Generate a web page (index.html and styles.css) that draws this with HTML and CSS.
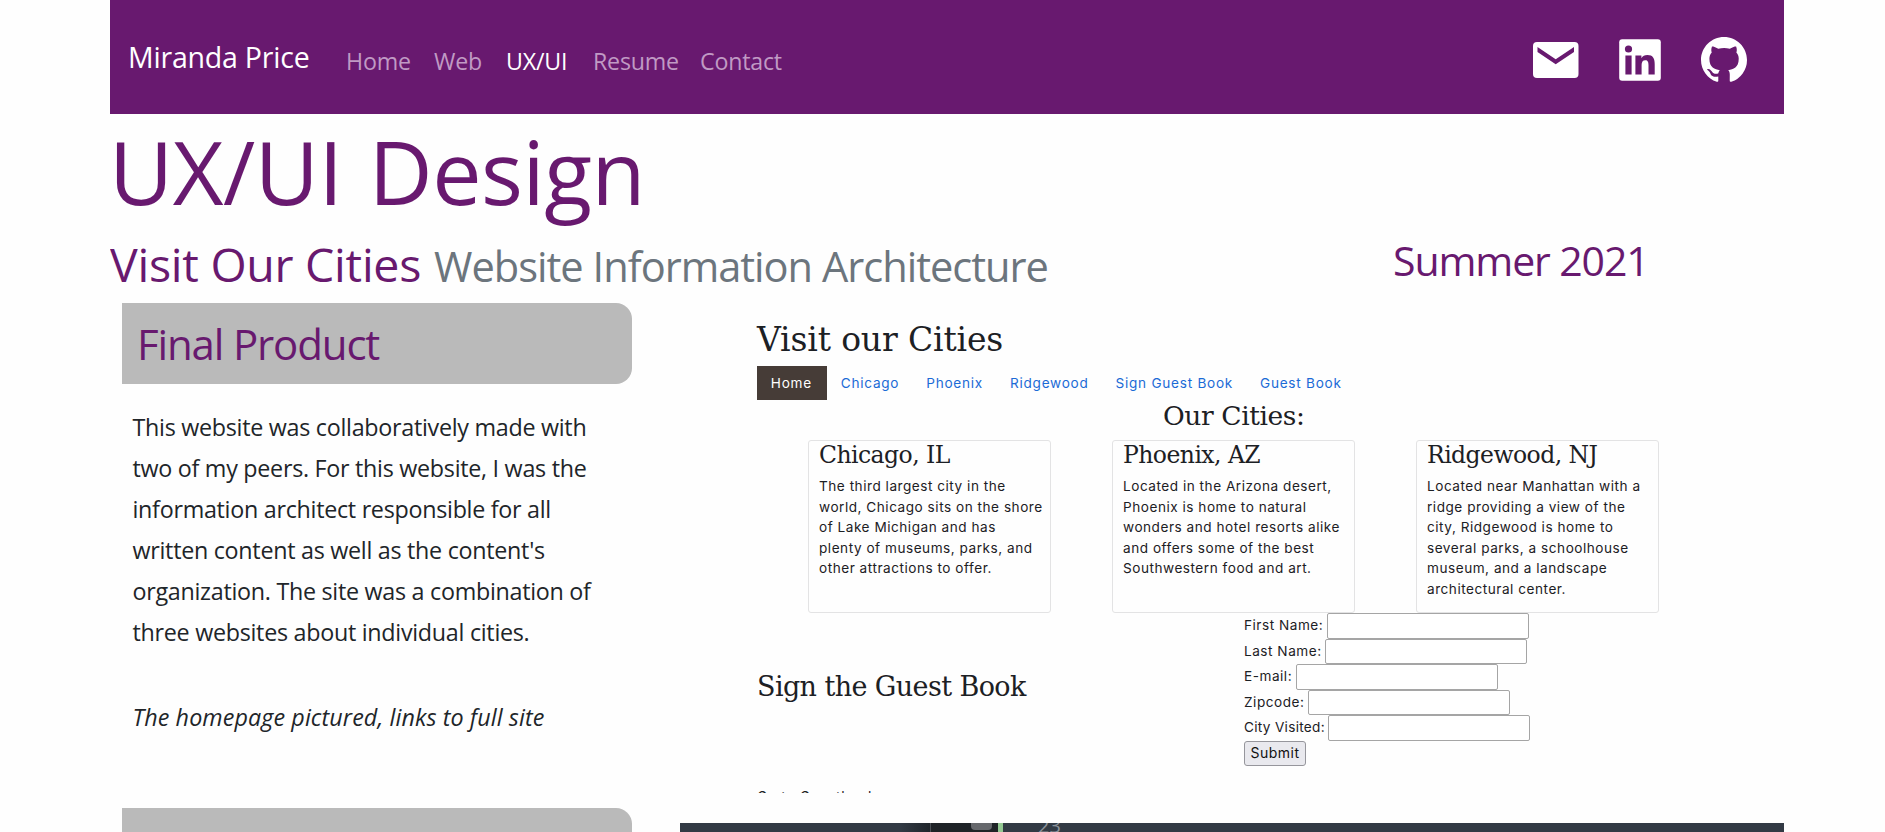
FILE: index.html
```html
<!DOCTYPE html>
<html lang="en">
<head>
<meta charset="utf-8">
<title>Miranda Price - UX/UI Design</title>
<link rel="stylesheet" href="styles.css">
</head>
<body>
<div class="page">
  <header class="navbar">
    <a class="brand">Miranda Price</a>
    <nav class="links">
      <a class="l-home">Home</a><a class="l-web">Web</a><a class="l-ux active">UX/UI</a><a class="l-resume">Resume</a><a class="l-contact">Contact</a>
    </nav>
    <div class="social">
      <svg width="46" height="46" viewBox="0 0 46 46"><rect x="0" y="5" width="45.500" height="36" rx="4" fill="#fff"/><path d="M4.500 10v5l18.200 12.300L41 15v-5L22.700 22.300z" fill="#68196f"/></svg>
      <svg width="42" height="46" viewBox="0 0 42 46"><rect x="0.200" y="2.300" width="41.600" height="41.400" rx="3" fill="#fff"/><g fill="#68196f"><circle cx="9.500" cy="12" r="3.600"/><path d="M6.400 18.500h6.200v19H6.400zM16.400 18.500h6v2.700c1.200-2 3.200-3.200 6-3.200 5.500 0 7.300 3.400 7.300 9v10.500h-6.200v-9.400c0-2.800-.6-4.900-3.200-4.900-2.700 0-3.700 2-3.700 4.900v9.400h-6.200z"/></g></svg>
      <svg width="46" height="46" viewBox="0 0 16 16"><path fill="#fff" d="M8 0C3.580 0 0 3.580 0 8c0 3.540 2.290 6.530 5.470 7.590.4.070.55-.17.55-.38 0-.19-.01-.82-.01-1.490-2.010.37-2.530-.49-2.690-.94-.09-.23-.48-.94-.82-1.130-.28-.15-.68-.52-.01-.53.63-.01 1.080.58 1.230.82.72 1.210 1.870.87 2.330.66.07-.52.28-.87.51-1.070-1.780-.2-3.640-.89-3.640-3.950 0-.87.31-1.590.82-2.150-.08-.2-.36-1.020.08-2.120 0 0 .67-.21 2.200.82.64-.18 1.320-.27 2-.27s1.360.09 2 .27c1.530-1.040 2.200-.82 2.200-.82.44 1.100.16 1.920.08 2.120.51.56.82 1.270.82 2.150 0 3.070-1.870 3.750-3.650 3.950.29.25.54.73.54 1.480 0 1.070-.01 1.930-.01 2.200 0 .21.15.46.55.38A8.010 8.010 0 0 0 16 8c0-4.420-3.580-8-8-8z"/></svg>
    </div>
  </header>

  <h1>UX/UI Design</h1>
  <div class="project-head">
    <h2><span class="name">Visit Our Cities</span><small>Website Information Architecture</small></h2>
    <span class="date">Summer 2021</span>
  </div>

  <main class="columns">
    <section class="left">
      <h3 class="label"><span>Final Product</span></h3>
      <p class="copy">This website was collaboratively made with<br>two of my peers. For this website, I was the<br>information architect responsible for all<br>written content as well as the content's<br>organization. The site was a combination of<br>three websites about individual cities.</p>
      <p class="note">The homepage pictured, links to full site</p>
      <div class="label next"></div>
    </section>

    <section class="right">
      <div class="shot">
        <div class="s-title">Visit our Cities</div>
        <div class="s-nav"><span class="on">Home</span><span>Chicago</span><span>Phoenix</span><span>Ridgewood</span><span>Sign Guest Book</span><span>Guest Book</span></div>
        <div class="s-sub">Our Cities:</div>
        <div class="cards">
          <div class="card"><b>Chicago, IL</b><p>The third largest city in the<br>world, Chicago sits on the shore<br>of Lake Michigan and has<br>plenty of museums, parks, and<br>other attractions to offer.</p></div>
          <div class="card"><b>Phoenix, AZ</b><p>Located in the Arizona desert,<br>Phoenix is home to natural<br>wonders and hotel resorts alike<br>and offers some of the best<br>Southwestern food and art.</p></div>
          <div class="card"><b>Ridgewood, NJ</b><p>Located near Manhattan with a<br>ridge providing a view of the<br>city, Ridgewood is home to<br>several parks, a schoolhouse<br>museum, and a landscape<br>architectural center.</p></div>
        </div>
        <div class="guest">
          <div class="s-sign">Sign the Guest Book</div>
          <div class="form">
            <div class="row"><span>First Name:</span><i></i></div>
            <div class="row"><span>Last Name:</span><i></i></div>
            <div class="row"><span>E-mail:</span><i></i></div>
            <div class="row"><span>Zipcode:</span><i></i></div>
            <div class="row"><span class="city">City Visited:</span><i></i></div>
            <div class="row"><button>Submit</button></div>
          </div>
        </div>
        <div class="s-more">Go to Guestbook</div>
      </div>
      <div class="editor"><div class="fade"></div><div class="phone"><i></i></div><div class="edge"></div><span>23</span></div>
    </section>
  </main>
</div>
</body>
</html>
```
FILE: styles.css
```css
* { box-sizing: border-box; }
body { margin: 0; background: #fefefe; color: #212529; font-family: "Open Sans", "Noto Sans", sans-serif; }
h1, h2, h3, p { margin: 0; font-weight: 400; }
.page { width: 1674px; height: 832px; overflow: hidden; margin-left: 110px; white-space: nowrap; }

.navbar { height: 114px; background: #68196f; color: #fff; display: flex; align-items: center; padding: 0 37px 0 18px; }
.brand { font-size: 28.5px; width: 218px; letter-spacing: -0.2px; }
.links { display: flex; padding-top: 7px; font-size: 23.2px; letter-spacing: -0.2px; color: #c09ac4; }
.links a { display: block; }
.l-home { width: 88px; }
.l-web { width: 72px; }
.l-ux { width: 87px; }
.l-resume { width: 107px; }
.active { color: #fff; }
.social { margin-left: auto; display: flex; align-items: center; gap: 40px; padding-top: 5px; }
.social svg { display: block; }

h1 { font-size: 88px; line-height: 107px; padding: 4px 0 0; height: 110px; text-indent: -1px; color: #68196f; letter-spacing: -0.5px; word-spacing: 4px; }
.project-head { display: flex; margin-top: 12px; height: 67px; }
h2 { width: 1283px; line-height: 57px; color: #68196f; font-size: 46.500px; letter-spacing: -0.27px; }
.name { display: inline-block; width: 324px; }
small { font-size: 41.600px; color: #6c757d; letter-spacing: -1px; }
.date { color: #68196f; font-size: 41px; line-height: 49px; letter-spacing: -1.1px; }

.columns { display: flex; }
.left { width: 570px; padding-left: 12px; }
.label { width: 510px; height: 81px; line-height: 81px; background: #bababa; border-radius: 0 16px 16px 0; padding-left: 15px; font-size: 42px; color: #68196f; letter-spacing: -1.15px; }
.copy { padding: 23px 0 0 10.5px; font-size: 23.300px; line-height: 40.900px; letter-spacing: -0.28px; }
.note { padding: 45px 0 0 10.5px; font-size: 23.300px; line-height: 41px; font-style: italic; letter-spacing: 0.1px; }
.next { margin-top: 70px; }

.right { width: 1104px; }
.shot { height: 490px; overflow: hidden; padding-left: 77px; font-family: Inter, sans-serif; font-size: 13.600px; letter-spacing: 0.52px; color: #1c2024; }
.s-title, .s-sub, .s-sign, .card b { font-family: "DejaVu Serif", serif; font-weight: 400; }
.s-title { font-size: 33px; line-height: 40px; height: 63px; padding-top: 17px; letter-spacing: -0.15px; }
.s-nav { display: flex; height: 34px; line-height: 35px; color: #1b6bd6; letter-spacing: 0.74px; }
.s-nav span { padding: 0 13.2px 0 13.8px; }
.s-nav .on { background: #463c37; color: #fff; width: 70px; }
.s-sub { font-size: 26.500px; line-height: 32px; height: 40px; padding-left: 406px; letter-spacing: -0.4px; }
.cards { display: flex; gap: 61px; padding-left: 51px; }
.card { width: 243px; height: 173px; border: 1px solid #e3e3e4; border-radius: 3px; padding-left: 10px; }
.card b { display: block; font-size: 23.5px; line-height: 28px; height: 35px; letter-spacing: -0.55px; }
.card p { line-height: 20.500px; }
.guest { display: flex; }
.s-sign { width: 487px; font-size: 27px; line-height: 32px; padding-top: 58px; letter-spacing: -0.6px; }
.row { height: 25.600px; display: flex; gap: 3.5px; line-height: 25px; }
.city { letter-spacing: 0.3px; }
.row i { width: 202px; border: 1px solid #a5a5a5; border-radius: 2px; background: #fff; }
.row button { font: inherit; font-size: 14px; letter-spacing: 0.5px; line-height: 22px; width: 62px; height: 25px; padding: 0; border: 1px solid #96969c; border-radius: 3px; background: #e9e9ee; color: #111; }
.s-more { font-size: 14px; line-height: 20px; padding-top: 20px; }
.editor { margin-top: 30px; height: 9px; overflow: hidden; display: flex; background: #323a44; color: #8b929a; }
.fade { width: 251px; background: linear-gradient(90deg, #323a44 220px, #20252b 250px); border-right: 1px solid #4c5056; }
.phone { width: 67px; background: #1f2327; padding-left: 40px; }
.phone i { display: block; width: 21px; height: 7px; background: #66686c; border-radius: 0 0 4px 4px; }
.edge { width: 5px; background: #93c892; }
.editor span { margin-left: 35px; font-size: 20px; line-height: 20px; margin-top: -7px; }
```
